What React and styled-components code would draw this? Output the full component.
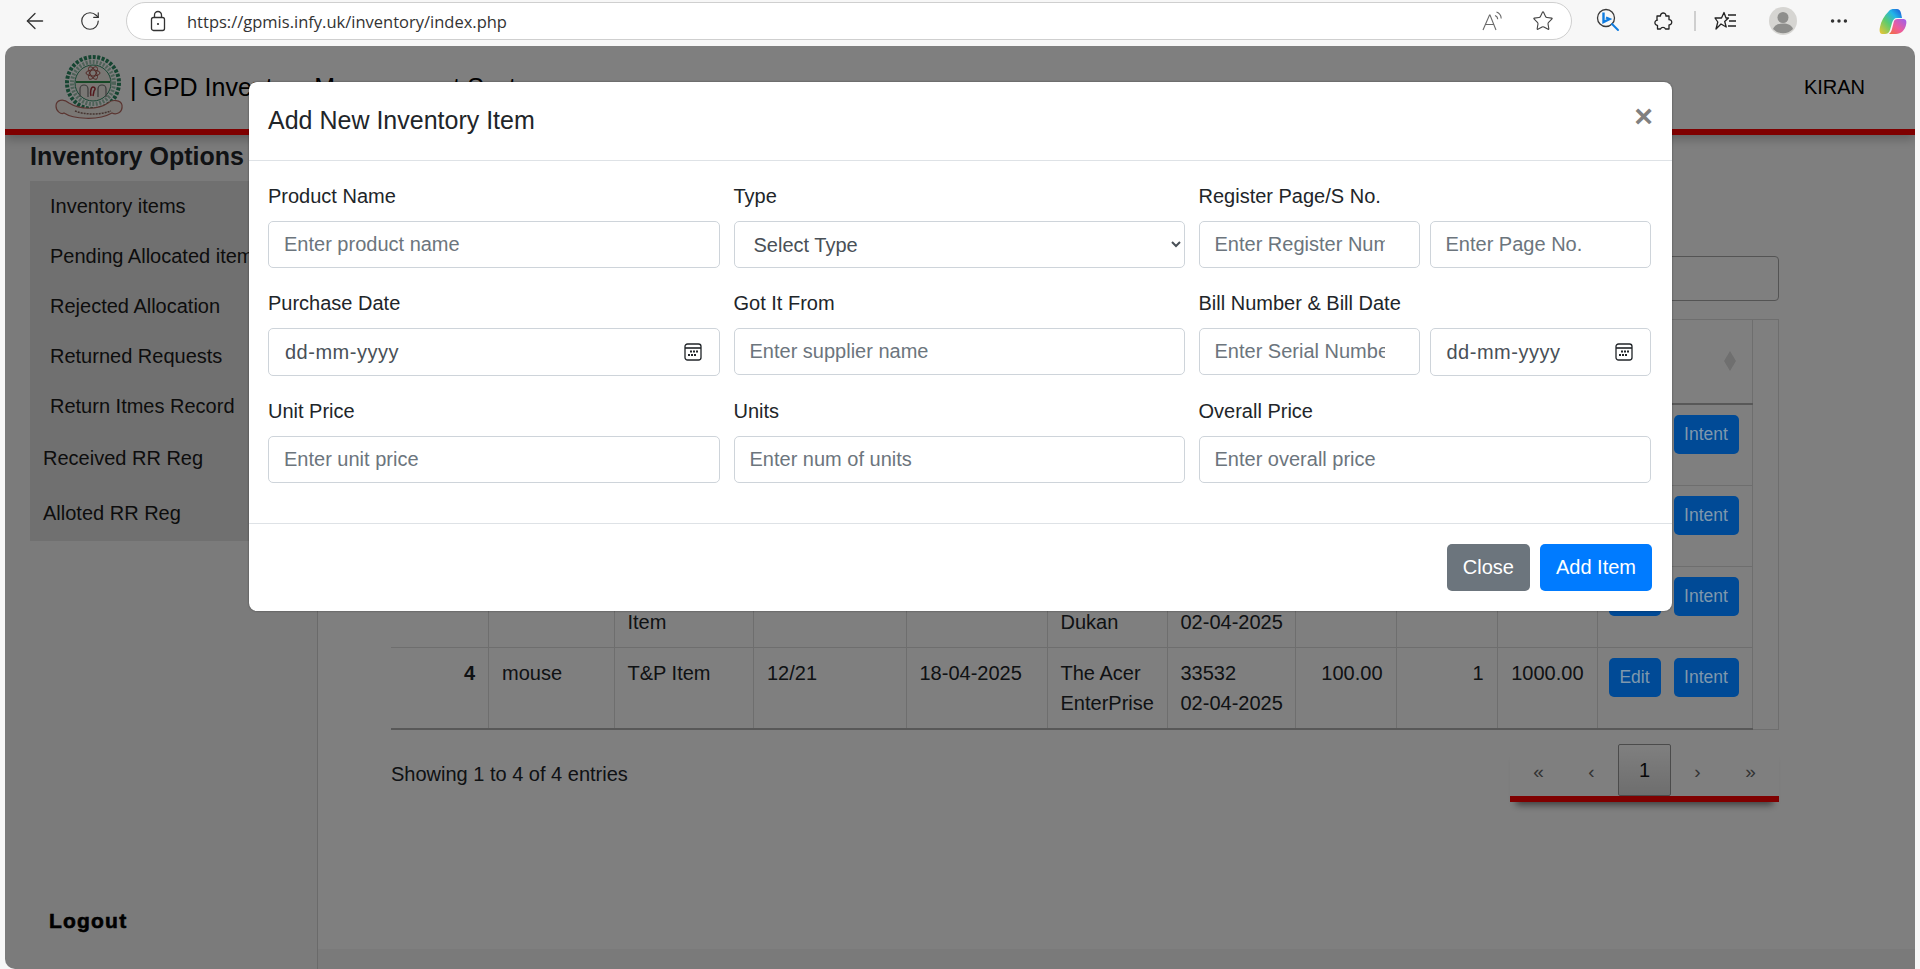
import React from "react";
import styled, { createGlobalStyle } from "styled-components";
import { ArrowLeft, RotateCw, Star, Ellipsis } from "lucide-react";

const columns = [97.5, 125.5, 139.5, 152.5, 141, 120, 128.5, 100.5, 101, 100, 155];
const headers = ["S.No", "Product Name", "Type", "Reg. Page/S.No", "Purchase Date", "Got It From", "Bill No. & Date", "Unit Price", "Units", "Overall Price", "Action"];

const rows = [
  { id: 1, name: "keyboard", type: "T&P Item", reg: "12/18", date: "12-04-2025", from: "The Acer EnterPrise", bill: "33529", billDate: "02-04-2025", price: "250.00", units: 4, total: "1000.00" },
  { id: 2, name: "monitor", type: "T&P Item", reg: "12/19", date: "14-04-2025", from: "The Acer EnterPrise", bill: "33530", billDate: "02-04-2025", price: "500.00", units: 2, total: "1000.00" },
  { id: 3, name: "cable", type: "Consumable Item", reg: "12/20", date: "16-04-2025", from: "Computer Dukan", bill: "33531", billDate: "02-04-2025", price: "200.00", units: 5, total: "1000.00" },
  { id: 4, name: "mouse", type: "T&P Item", reg: "12/21", date: "18-04-2025", from: "The Acer EnterPrise", bill: "33532", billDate: "02-04-2025", price: "100.00", units: 1, total: "1000.00" },
];

const GlobalStyle = createGlobalStyle`
  * { box-sizing: border-box; }
  html, body { margin: 0; height: 100%; overflow: hidden; }
  body { font-family: "Liberation Sans", Arial, sans-serif; background: #f7f7f7; }
`;

const Win = styled.div`
  height: 969px;
  display: flex;
  flex-direction: column;
`;

const BrowserBar = styled.div`
  height: 46px;
  flex: none;
  display: flex;
  align-items: flex-start;
  padding: 2px 0 0 5px;
  color: #333;
`;

const Slot = styled.div`
  width: ${(p) => p.$w}px;
  height: 38px;
  flex: none;
  display: flex;
  align-items: center;
  justify-content: center;
  margin-left: ${(p) => p.$ml || 0}px;
`;

const UrlBar = styled.div`
  width: 1446px;
  height: 38px;
  flex: none;
  margin-left: 11px;
  display: flex;
  align-items: center;
  background: #fff;
  border: 1px solid #cfcfcf;
  border-radius: 19px;
  padding: 0 3px 0 19px;
`;

const UrlText = styled.span`
  margin-left: 17px;
  font-family: "Open Sans", sans-serif;
  font-size: 16.5px;
  color: #333;
  flex: 1;
`;

const Separator = styled.div`
  width: 1.5px;
  height: 20px;
  background: #cfcfcf;
`;

const Page = styled.div`
  position: relative;
  flex: 1;
  width: 1910px;
  margin-left: 5px;
  border-radius: 10px 10px 0 10px;
  overflow: hidden;
  background: #fff;
  display: flex;
  flex-direction: column;
`;

const Header = styled.header`
  height: 89px;
  flex: none;
  display: flex;
  align-items: center;
  padding: 0 50px 0 50px;
  background: #fff;
  border-bottom: 6px solid #f00;
  box-shadow: 0 4px 10px rgba(0, 0, 0, 0.25);
  position: relative;
  color: #000;
`;

const Brand = styled.div`
  font-size: 25px;
  margin-left: -5px;
  white-space: nowrap;
  flex: 1;
`;

const UserName = styled.div`
  font-size: 20px;
`;

const Body = styled.div`
  flex: 1;
  display: flex;
  min-height: 0;
`;

const Sidebar = styled.aside`
  width: 313px;
  flex: none;
  display: flex;
  flex-direction: column;
  background: #f7f7f7;
  border-right: 1px solid #d4d4d4;
  padding: 6px 0 36px 25px;
`;

const SideTitle = styled.div`
  font-size: 25px;
  line-height: 30px;
  font-weight: 700;
  color: #212529;
  margin-bottom: 10px;
  white-space: nowrap;
`;

const SideList = styled.div`
  width: 262px;
  background: #e1e1e1;
`;

const SideItem = styled.div`
  height: ${(p) => (p.$top ? 55 : 50)}px;
  display: flex;
  align-items: center;
  padding-left: ${(p) => (p.$top ? 13 : 20)}px;
  font-size: 20px;
  color: #1a1a1a;
  white-space: nowrap;
`;

const Logout = styled.div`
  margin-top: auto;
  margin-left: 19px;
  font-size: 21px;
  line-height: 24px;
  font-weight: 700;
  letter-spacing: 1.2px;
  color: #000;
  -webkit-text-stroke: 0.6px #000;
`;

const Main = styled.main`
  flex: 1;
  display: flex;
  flex-direction: column;
  background: #fff;
`;

const Content = styled.div`
  flex: 1;
  display: flex;
  flex-direction: column;
  padding: 121px 136px 0 73px;
`;

const SearchBox = styled.div`
  align-self: flex-end;
  width: 420px;
  height: 45px;
  border: 1px solid #a8a8a8;
  border-radius: 4px;
  margin-bottom: 18px;
`;

const TableFrame = styled.div`
  display: flex;
  border-top: 1px solid #dcdcdc;
  border-right: 1px solid #dcdcdc;
`;

const Gutter = styled.div`
  flex: 1;
  border-bottom: 1px solid #dcdcdc;
`;

const Table = styled.table`
  width: 1361px;
  flex: none;
  table-layout: fixed;
  border-collapse: collapse;
  font-size: 20px;
  line-height: 30px;
  color: #212529;
  border-bottom: 2px solid #b0b0b0;
`;

const Th = styled.th`
  height: 84px;
  padding: 10px 13px;
  text-align: left;
  vertical-align: top;
  font-weight: 700;
  border-right: 1px solid #dcdcdc;
  border-bottom: 2px solid #b0b0b0;
`;

const Td = styled.td`
  height: 81px;
  padding: 10px 13px;
  vertical-align: top;
  text-align: ${(p) => (p.$right ? "right" : "left")};
  font-weight: ${(p) => (p.$bold ? 700 : 400)};
  white-space: ${(p) => (p.$nowrap ? "nowrap" : "normal")};
  border-right: 1px solid #dcdcdc;
  border-bottom: 1px solid #dcdcdc;
`;

const ThInner = styled.div`
  position: relative;
`;

const SortMark = styled.svg`
  position: absolute;
  right: 3px;
  top: 21px;
`;

const ActionCell = styled(Td)`
  padding: 10px 0 0 11px;
`;

const RowBtn = styled.button`
  position: relative;
  z-index: 2;
  height: 39px;
  border: 0;
  border-radius: 5px;
  padding: 0;
  width: ${(p) => p.$w}px;
  margin-right: 13px;
  background: #004a96;
  color: #7f98ad;
  font: 17.5px "Liberation Sans", Arial, sans-serif;
`;

const TableFoot = styled.div`
  display: flex;
  justify-content: space-between;
  align-items: flex-start;
  margin-top: 14px;
`;

const Info = styled.div`
  font-size: 20px;
  line-height: 30px;
  color: #212529;
  margin-top: 15px;
`;

const Pager = styled.div`
  width: 269px;
  display: flex;
  justify-content: center;
  border-bottom: 6px solid #f00;
  box-shadow: 0 9px 7px -6px rgba(0, 0, 0, 0.5);
`;

const PageCell = styled.div`
  width: 53px;
  height: 52px;
  display: flex;
  align-items: center;
  justify-content: center;
  padding-top: ${(p) => (p.$current ? 0 : 4)}px;
  font-size: ${(p) => (p.$current ? 20 : 19)}px;
  color: ${(p) => (p.$current ? "#111" : "#666")};
  ${(p) => p.$current && "border: 1px solid #979797; border-radius: 2px; background: linear-gradient(#fff, #dcdcdc);"}
`;

const FootStrip = styled.div`
  height: 20px;
  flex: none;
  background: #f4f4f4;
`;

const Overlay = styled.div`
  position: absolute;
  inset: 0;
  z-index: 1;
  background: rgba(0, 0, 0, 0.5);
`;

const ModalBox = styled.div`
  position: absolute;
  z-index: 3;
  left: 244px;
  top: 36px;
  width: 1423px;
  background: #fff;
  border-radius: 8px;
  box-shadow: 0 0 2px rgba(0, 0, 0, 0.5);
`;

const ModalHeader = styled.div`
  height: 79px;
  display: flex;
  align-items: center;
  justify-content: space-between;
  padding: 0 20px 2px 19px;
  border-bottom: 1px solid #dee2e6;
`;

const ModalTitle = styled.div`
  font-size: 25px;
  color: #212529;
`;

const CloseX = styled.span`
  font-size: 32px;
  line-height: 30px;
  font-weight: 700;
  color: #808080;
  margin-right: -1px;
  margin-bottom: 8px;
`;

const FormGrid = styled.div`
  display: grid;
  grid-template-columns: 452px 451.5px 452px;
  column-gap: 13.5px;
  row-gap: 20px;
  padding: 20px 22px 40px 19px;
  border-bottom: 1px solid #dee2e6;
`;

const Field = styled.div`
  display: flex;
  flex-direction: column;
`;

const Label = styled.label`
  font-size: 20px;
  line-height: 30px;
  margin-bottom: 10px;
  color: #212529;
`;

const Pair = styled.div`
  display: grid;
  grid-template-columns: 1fr 1fr;
  column-gap: 10px;
`;

const Input = styled.input`
  width: 100%;
  height: 47px;
  min-width: 0;
  border: 1px solid #ced4da;
  border-radius: 5px;
  padding: 0 34px 0 15px;
  font: 20px "Liberation Sans", Arial, sans-serif;
  color: #495057;
  background: #fff;
  outline: none;
  &::placeholder { color: #6c757d; opacity: 1; }
`;

const Select = styled.select`
  width: 100%;
  height: 47px;
  border: 1px solid #ced4da;
  border-radius: 5px;
  padding: 0 0 0 15px;
  font: 20px "Liberation Sans", Arial, sans-serif;
  color: #495057;
  background: #fff;
`;

const DateBox = styled.div`
  height: 48px;
  display: flex;
  align-items: center;
  justify-content: space-between;
  border: 1px solid #ced4da;
  border-radius: 5px;
  padding: 0 17px 0 16px;
  font-size: 20px;
  letter-spacing: 0.5px;
  color: #495057;
`;

const ModalFooter = styled.div`
  display: flex;
  justify-content: flex-end;
  gap: 10px;
  padding: 20px;
`;

const Button = styled.button`
  height: 47px;
  padding: 0 16px;
  border: 0;
  border-radius: 5px;
  background: ${(p) => p.$bg};
  color: #fff;
  font: 20px "Liberation Sans", Arial, sans-serif;
`;

const CalendarIcon = () => (
  <svg width="18" height="18" viewBox="0 0 18 18" fill="none" stroke="#212529" strokeWidth="1.3">
    <rect x="1" y="1" width="16" height="16" rx="2.5" />
    <path d="M1 5h16" strokeWidth="1.6" />
    <g fill="#212529" stroke="none">
      <rect x="6" y="7.5" width="2" height="2" />
      <rect x="9" y="7.5" width="2" height="2" />
      <rect x="12" y="7.5" width="2" height="2" />
      <rect x="4" y="11" width="2" height="2" />
      <rect x="7" y="11" width="2" height="2" />
      <rect x="10" y="11" width="2" height="2" />
    </g>
  </svg>
);

const LockIcon = () => (
  <svg width="18" height="24" viewBox="0 0 18 24" fill="none" stroke="#333" strokeWidth="1.3">
    <rect x="2.5" y="8.5" width="13" height="13" rx="2" />
    <path d="M5.5 8.5V6a3.5 3.5 0 0 1 7 0v2.500" />
    <circle cx="9" cy="15" r="1.100" fill="#333" stroke="none" />
  </svg>
);

const ReadAloudIcon = () => (
  <svg width="24" height="24" viewBox="0 0 24 24" fill="none" stroke="#6a6a6a" strokeWidth="1.100">
    <path d="M2 21 8.500 6h.5L15 21M4.500 15.500h8.500" />
    <path d="M14 6.500c1.600.6 2.600 2 2.700 3.800M15.500 3c2.700 1 4.600 3.500 4.700 6.500" />
  </svg>
);

const BingIcon = () => (
  <svg width="24" height="26" viewBox="0 0 24 26" fill="none">
    <circle cx="10" cy="10" r="8.500" stroke="#3a3a3a" strokeWidth="1.300" />
    <path d="M7.500 4.500v9.500l6-3-3.500-1.500" stroke="#0f7ce0" strokeWidth="2.400" />
    <path d="m16 16 6 6" stroke="#0f7ce0" strokeWidth="2" strokeLinecap="round" />
  </svg>
);

const PuzzleIcon = () => (
  <svg width="22" height="24" viewBox="0 0 22 24" fill="none" stroke="#222" strokeWidth="1.300" strokeLinejoin="round">
    <path d="M4 7h3.500a2.700 2.700 0 1 1 5.400-.6c0 .3 0 .4-.1.6H16v3.700a2.600 2.600 0 1 1 .3 5.200H16V20h-3.500a2.700 2.700 0 0 0-5 0H4.500v-3.700a2.600 2.600 0 1 1 0-5.200L4 11z" />
  </svg>
);

const FavoritesIcon = () => (
  <svg width="24" height="24" viewBox="0 0 24 24" fill="none" stroke="#222" strokeWidth="1.300" strokeLinejoin="round">
    <path d="M10 3.500 12 9h2.500l-3.800 3.500 1.500 5.500L7 15l-5 5 1.800-7L1 9h6.500z" />
    <path d="M14 6h8M15 12h7M14 17h8" />
  </svg>
);

const AvatarIcon = () => (
  <svg width="28" height="28" viewBox="0 0 28 28">
    <circle cx="14" cy="14" r="14" fill="#d6d5d2" />
    <circle cx="14" cy="10.500" r="5.500" fill="#8e8e8c" />
    <path d="M4 22c1.500-4 5-5.500 10-5.500s8.500 1.500 10 5.500a14 14 0 0 1-20 0z" fill="#8e8e8c" />
  </svg>
);

const CopilotIcon = () => (
  <svg width="28" height="25" viewBox="0 0 28 25">
    <defs>
      <linearGradient id="copA" x1="0" y1="1" x2="1" y2="0">
        <stop offset="0" stopColor="#f4c430" />
        <stop offset="0.4" stopColor="#5ccb6e" />
        <stop offset="0.7" stopColor="#22b5e8" />
        <stop offset="1" stopColor="#1a4fd8" />
      </linearGradient>
      <linearGradient id="copB" x1="1" y1="0" x2="0" y2="1">
        <stop offset="0" stopColor="#9a5ff0" />
        <stop offset="0.55" stopColor="#ee5c9a" />
        <stop offset="1" stopColor="#f2703a" />
      </linearGradient>
    </defs>
    <path d="M10 2C11 .5 13 0 15 0h3c2 0 3 1 4 4l1 5h-5c-3 0-4 2-5 5l-2 7c-1 3-3 4-5 4H3c-2 0-3-3-2-7C2 12 5 7 10 2z" fill="url(#copA)" />
    <path d="M15 12c1-2 3-2 5-2h4c3 0 4 2 3 6-1 5-5 9-10 9h-7c1.500-1 2.500-3 3-5z" fill="url(#copB)" />
  </svg>
);

const SealLogo = () => (
  <svg width="80" height="70" viewBox="0 0 80 70" fill="none">
    <circle cx="38" cy="30" r="26" stroke="#2c8a63" strokeWidth="4" strokeDasharray="3 1.500" />
    <circle cx="38" cy="30" r="21" stroke="#9cc4b0" strokeWidth="4" strokeDasharray="2 1.500" />
    <circle cx="38" cy="30" r="18" stroke="#2c8a63" strokeWidth="1" fill="#f2eee8" />
    <g stroke="#a5564f" strokeWidth="1">
      <ellipse cx="38" cy="20" rx="7" ry="3" />
      <ellipse cx="38" cy="20" rx="7" ry="3" transform="rotate(60 38 20)" />
      <ellipse cx="38" cy="20" rx="7" ry="3" transform="rotate(120 38 20)" />
    </g>
    <path d="M21 29h34" stroke="#2f8f4c" strokeWidth="2" />
    <path d="M25 44V36a4 4 0 0 1 8 0v8M43 44V36a4 4 0 0 1 8 0v8" stroke="#777" strokeWidth="1.200" />
    <path d="M36 43c-1-4 0-9 2-9s3 2 1 4l-1 5" stroke="#a5303a" strokeWidth="1.500" />
    <path d="M14 50c-6-5-13-3-13 3 0 5 5 9 8 7 9 6 34 8 48 0 4 2 11 0 10-8-1-5-10-6-14-2-10 7-28 7-39 0z" stroke="#b56a62" strokeWidth="1.200" fill="#f5efe9" />
    <path d="M20 58c10 4 25 4 36 0" stroke="#8a6a62" strokeWidth="1.500" strokeDasharray="2 1" />
  </svg>
);

const App = () => {
  return (
    <Win>
      <GlobalStyle />
      <BrowserBar>
        <Slot $w={60}><ArrowLeft size={26} strokeWidth={1.2} /></Slot>
        <Slot $w={50}><RotateCw size={22} strokeWidth={1.3} /></Slot>
        <UrlBar>
          <Slot $w={24}><LockIcon /></Slot>
          <UrlText>https://gpmis.infy.uk/inventory/index.php</UrlText>
          <Slot $w={50}><ReadAloudIcon /></Slot>
          <Slot $w={50}><Star size={22} strokeWidth={1.2} color="#444" /></Slot>
        </UrlBar>
        <Slot $w={72}><BingIcon /></Slot>
        <Slot $w={40}><PuzzleIcon /></Slot>
        <Slot $w={22}><Separator /></Slot>
        <Slot $w={40}><FavoritesIcon /></Slot>
        <Slot $w={74}><AvatarIcon /></Slot>
        <Slot $w={38}><Ellipsis size={22} strokeWidth={1.8} /></Slot>
        <Slot $w={54} $ml={8}><CopilotIcon /></Slot>
      </BrowserBar>

      <Page>
        <Header>
          <SealLogo />
          <Brand>| GPD Inventory Management System</Brand>
          <UserName>KIRAN</UserName>
        </Header>
        <Body>
          <Sidebar>
            <SideTitle>Inventory Options</SideTitle>
            <SideList>
              <SideItem>Inventory items</SideItem>
              <SideItem>Pending Allocated items</SideItem>
              <SideItem>Rejected Allocation</SideItem>
              <SideItem>Returned Requests</SideItem>
              <SideItem>Return Itmes Record</SideItem>
              <SideItem $top>Received RR Reg</SideItem>
              <SideItem $top>Alloted RR Reg</SideItem>
            </SideList>
            <Logout>Logout</Logout>
          </Sidebar>
          <Main>
            <Content>
              <SearchBox />
              <TableFrame>
                <Table>
                  <colgroup>
                    {columns.map((w, i) => <col key={i} width={w} />)}
                  </colgroup>
                  <thead>
                    <tr>
                      {headers.map((h, i) => (
                        <Th key={h}>
                          <ThInner>
                            {h}
                            {i === headers.length - 1 && (
                              <SortMark width="12" height="20" viewBox="0 0 12 20">
                                <path d="M6 0 12 10 6 20 0 10z" fill="#dedede" />
                              </SortMark>
                            )}
                          </ThInner>
                        </Th>
                      ))}
                    </tr>
                  </thead>
                  <tbody>
                    {rows.map((r) => (
                      <tr key={r.id}>
                        <Td $right $bold>{r.id}</Td>
                        <Td>{r.name}</Td>
                        <Td>{r.type}</Td>
                        <Td>{r.reg}</Td>
                        <Td>{r.date}</Td>
                        <Td>{r.from}</Td>
                        <Td $nowrap>{r.bill}<br />{r.billDate}</Td>
                        <Td $right>{r.price}</Td>
                        <Td $right>{r.units}</Td>
                        <Td $right>{r.total}</Td>
                        <ActionCell $nowrap>
                          <RowBtn $w={52}>Edit</RowBtn>
                          <RowBtn $w={65}>Intent</RowBtn>
                        </ActionCell>
                      </tr>
                    ))}
                  </tbody>
                </Table>
                <Gutter />
              </TableFrame>
              <TableFoot>
                <Info>Showing 1 to 4 of 4 entries</Info>
                <Pager>
                  <PageCell>«</PageCell>
                  <PageCell>‹</PageCell>
                  <PageCell $current>1</PageCell>
                  <PageCell>›</PageCell>
                  <PageCell>»</PageCell>
                </Pager>
              </TableFoot>
            </Content>
            <FootStrip />
          </Main>
        </Body>

        <Overlay />
        <ModalBox>
          <ModalHeader>
            <ModalTitle>Add New Inventory Item</ModalTitle>
            <CloseX>×</CloseX>
          </ModalHeader>
          <FormGrid>
            <Field>
              <Label>Product Name</Label>
              <Input placeholder="Enter product name" />
            </Field>
            <Field>
              <Label>Type</Label>
              <Select defaultValue="">
                <option value="">Select Type</option>
                <option>T&amp;P Item</option>
                <option>Consumable Item</option>
              </Select>
            </Field>
            <Field>
              <Label>Register Page/S No.</Label>
              <Pair>
                <Input placeholder="Enter Register Number" />
                <Input placeholder="Enter Page No." />
              </Pair>
            </Field>
            <Field>
              <Label>Purchase Date</Label>
              <DateBox>dd-mm-yyyy<CalendarIcon /></DateBox>
            </Field>
            <Field>
              <Label>Got It From</Label>
              <Input placeholder="Enter supplier name" />
            </Field>
            <Field>
              <Label>Bill Number &amp; Bill Date</Label>
              <Pair>
                <Input placeholder="Enter Serial Number" />
                <DateBox>dd-mm-yyyy<CalendarIcon /></DateBox>
              </Pair>
            </Field>
            <Field>
              <Label>Unit Price</Label>
              <Input placeholder="Enter unit price" />
            </Field>
            <Field>
              <Label>Units</Label>
              <Input placeholder="Enter num of units" />
            </Field>
            <Field>
              <Label>Overall Price</Label>
              <Input placeholder="Enter overall price" />
            </Field>
          </FormGrid>
          <ModalFooter>
            <Button $bg="#6c757d">Close</Button>
            <Button $bg="#007bff">Add Item</Button>
          </ModalFooter>
        </ModalBox>
      </Page>
    </Win>
  );
};

export default App;
